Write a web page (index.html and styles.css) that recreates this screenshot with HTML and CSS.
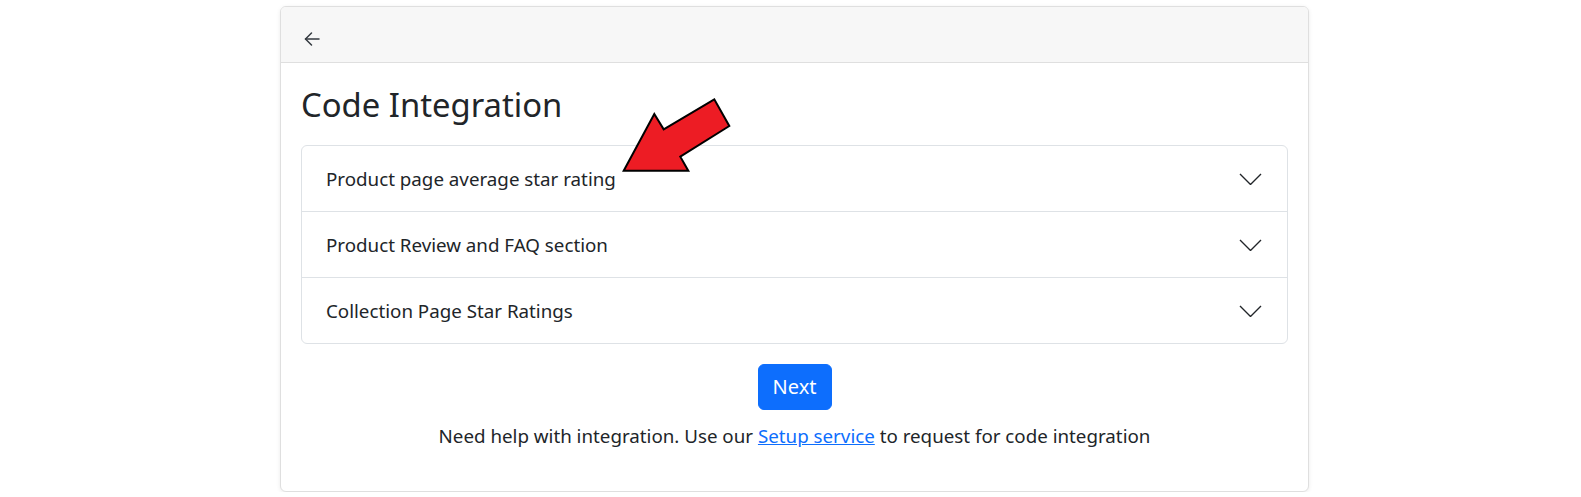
FILE: index.html
```html
<!DOCTYPE html>
<html lang="en">
<head>
<meta charset="utf-8">
<title>Code Integration</title>
<link rel="stylesheet" href="styles.css">
</head>
<body>
<div class="page">
  <div class="card">
    <div class="card-header">
      <button class="back-btn" aria-label="Back">
        <svg width="16" height="16" viewBox="0 0 16 16" fill="none" stroke="#343a40" stroke-width="1.5" stroke-linecap="round" stroke-linejoin="round">
          <path d="M15 8H1.5"/>
          <path d="M7.5 2L1.5 8l6 6"/>
        </svg>
      </button>
    </div>
    <div class="card-body">
      <h2 class="title">Code Integration</h2>
      <div class="accordion">
        <div class="acc-item">
          <span class="acc-label">Product page average star rating</span>
          <svg class="chevron" width="23" height="12" viewBox="0 0 23 12" fill="none" stroke="#212529" stroke-width="1.4" stroke-linejoin="miter"><path d="M1 1l10.5 10.5 10.5-10.5"/></svg>
        </div>
        <div class="acc-item">
          <span class="acc-label">Product Review and FAQ section</span>
          <svg class="chevron" width="23" height="12" viewBox="0 0 23 12" fill="none" stroke="#212529" stroke-width="1.4" stroke-linejoin="miter"><path d="M1 1l10.5 10.5 10.5-10.5"/></svg>
        </div>
        <div class="acc-item">
          <span class="acc-label">Collection Page Star Ratings</span>
          <svg class="chevron" width="23" height="12" viewBox="0 0 23 12" fill="none" stroke="#212529" stroke-width="1.4" stroke-linejoin="miter"><path d="M1 1l10.5 10.5 10.5-10.5"/></svg>
        </div>
      </div>
      <div class="actions">
        <button class="btn-next">Next</button>
      </div>
      <p class="help">Need help with integration. Use our <a href="#">Setup service</a> to request for code integration</p>
    </div>
    <svg class="pointer" width="120" height="82" viewBox="0 0 120 82">
      <polygon points="7.7,75.7 38.3,19 47.7,34.3 98.3,4.3 113.3,31 64.3,61.7 72.3,75.7" fill="#ed1c24" stroke="#000" stroke-width="2" stroke-linejoin="miter"/>
    </svg>
  </div>
</div>
</body>
</html>
```
FILE: styles.css
```css
* { box-sizing: border-box; }
html, body { margin: 0; padding: 0; background: #fff; }
body {
  font-family: "Noto Sans", "Open Sans", sans-serif;
  color: #212529;
  font-size: 18.75px;
  line-height: 24px;
}
.page {
  display: flex;
  justify-content: center;
  padding: 6px 0 0 8px;
}
.card {
  position: relative;
  width: 1029px;
  height: 486px;
  border: 1px solid #dfdfdf;
  border-radius: 6px;
  box-shadow: 0 1px 4px rgba(0,0,0,0.08);
  background: #fff;
  display: flex;
  flex-direction: column;
}
.card-header {
  height: 56px;
  background: #f7f7f7;
  border-bottom: 1px solid #dfdfdf;
  border-radius: 5px 5px 0 0;
  display: flex;
  align-items: flex-start;
  padding: 24px 0 0 23px;
}
.back-btn {
  border: 0;
  background: transparent;
  padding: 0;
  width: 16px;
  height: 16px;
  display: flex;
  align-items: center;
  justify-content: center;
}
.card-body {
  padding: 22px 20px 0 20px;
}
.title {
  margin: 0 0 20px 0;
  font-size: 32.8px;
  line-height: 40px;
  font-weight: 400;
}
.accordion {
  border: 1px solid #dee2e6;
  border-radius: 6px;
}
.acc-item {
  box-sizing: content-box;
  height: 65px;
  display: flex;
  align-items: center;
  justify-content: space-between;
  padding: 0 25px 0 24px;
  border-top: 1px solid #dee2e6;
}
.acc-item:first-child { border-top: 0; }
.chevron { display: block; }
.actions {
  display: flex;
  justify-content: center;
  padding-top: 20px;
}
.btn-next {
  font-family: inherit;
  background: #0d6efd;
  color: #fff;
  border: 1px solid #0d6efd;
  border-radius: 6px;
  font-size: 20px;
  line-height: 28px;
  height: 46px;
  width: 74px;
  padding: 0;
}
.help {
  margin: 14px 0 0 0;
  text-align: center;
}
.help a { color: #0d6efd; text-decoration: underline; }
.pointer {
  position: absolute;
  left: 335px;
  top: 88px;
}
```
